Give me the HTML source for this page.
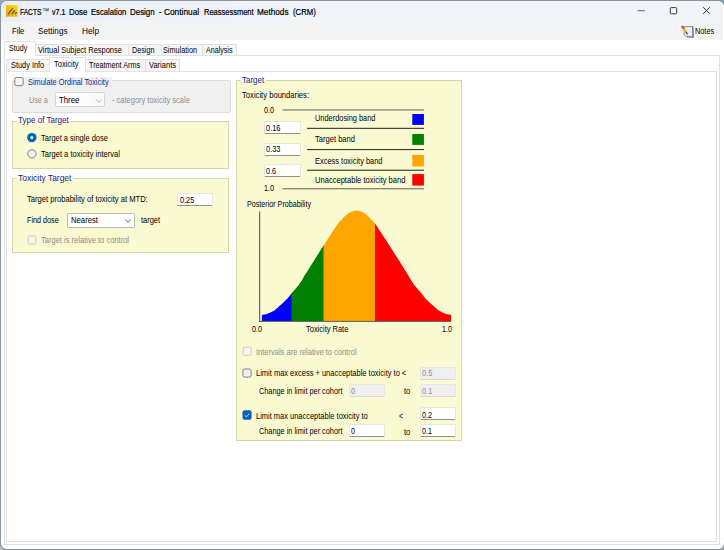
<!DOCTYPE html>
<html><head><meta charset="utf-8"><title>FACTS v7.1 Dose Escalation Design - Continual Reassessment Methods (CRM)</title>
<style>
html,body{margin:0;padding:0}
body{width:724px;height:550px;overflow:hidden;background:linear-gradient(90deg,#93abc2,#7f9bb6);font-family:"Liberation Sans",sans-serif;position:relative}
#win{position:absolute;left:0;top:0;width:724px;height:550px;overflow:hidden}
.b,.abs,.t{position:absolute;box-sizing:border-box}
.t{white-space:pre;line-height:1;transform-origin:0 50%;display:block}
.in{background:#fff;border:1px solid #e6e6e0;border-bottom-color:#909090;border-radius:1.5px}
.ind{background:#efefef;border:1px solid #e6e6e2;border-bottom-color:#d8d8d8;border-radius:1.5px}
.yg{background:#fafad2;border:1px solid #d6d6ae}

</style></head>
<body>
<div id="win">
<!-- desktop strip visible under the window -->
<div class="b" style="left:0;top:546px;width:724px;height:4px;background:linear-gradient(90deg,#b9bcc0 0,#b9bcc0 30px,#4a7a95 40px,#2f5fa8 70px,#2b4f8f 250px,#50658a 300px,#a9abae 325px,#a4a4a4 100%)"></div>
<!-- window frame -->
<div class="b" style="left:0.5px;top:1px;width:723px;height:547.5px;background:#fff;border-radius:6px;box-shadow:0 0 0 1px #8a949f"></div>
<div class="b" style="left:1px;top:1px;width:722px;height:20.5px;background:linear-gradient(90deg,#e9eff7,#f1f4f9 40%,#f1f4f9);border-radius:6px 6px 0 0"></div>
<div class="b" style="left:1px;top:21.5px;width:722px;height:18px;background:#f3f3f3"></div>
<!-- outer tab page -->
<div class="b" style="left:4px;top:55px;width:716px;height:490px;background:#fff;border:1px solid #e2e2e2"></div>
<!-- inner tab page -->
<div class="b" style="left:6px;top:71px;width:711px;height:471px;background:#fff;border:1px solid #e2e2e2"></div>
<!-- tabs row 1 -->
<div class="b" style="left:35px;top:44px;width:201.5px;height:11px;background:#f6f6f6;border:1px solid #e0e0e0;border-bottom:none"></div>
<div class="b" style="left:127.5px;top:44px;width:1px;height:12px;background:#e0e0e0"></div>
<div class="b" style="left:161px;top:44px;width:1px;height:12px;background:#e0e0e0"></div>
<div class="b" style="left:202px;top:44px;width:1px;height:12px;background:#e0e0e0"></div>
<div class="b" style="left:4px;top:41px;width:31.5px;height:15px;background:#fff;border:1px solid #e0e0e0;border-bottom:none"></div>
<!-- tabs row 2 -->
<div class="b" style="left:6px;top:59px;width:173.5px;height:12px;background:#f6f6f6;border:1px solid #e0e0e0;border-bottom:none"></div>
<div class="b" style="left:144.5px;top:59px;width:1px;height:12px;background:#e0e0e0"></div>
<div class="b" style="left:48.5px;top:57px;width:37px;height:15px;background:#fff;border:1px solid #e0e0e0;border-bottom:none"></div>
<!-- title bar icon -->
<svg class="abs" style="left:6.2px;top:5.2px" width="11.8" height="11.7" viewBox="0 0 12 12" preserveAspectRatio="none">
<defs><linearGradient id="ig" x1="0" y1="1" x2="1" y2="0"><stop offset="0" stop-color="#f59a0e"/><stop offset="1" stop-color="#ffe400"/></linearGradient></defs>
<rect x="0" y="0" width="12" height="12" fill="url(#ig)"/>
<path transform="translate(0.5,0.45)" d="M2 8.7 L6.2 3 M5.8 8.6 L8.2 5.3 M9 8.4 L10.1 7.3" stroke="#54524a" stroke-width="1.25" fill="none" stroke-linecap="round"/>
</svg>
<!-- window controls -->
<svg class="abs" style="left:630px;top:0" width="94" height="22" viewBox="0 0 94 22">
<path d="M7.5 10.7 H15" stroke="#5e5e5e" stroke-width="0.9" fill="none"/>
<rect x="40.3" y="7.6" width="6.4" height="6.2" rx="1" fill="none" stroke="#222" stroke-width="0.9"/>
<path d="M73.2 7.2 L79.8 13.9 M79.8 7.2 L73.2 13.9" stroke="#222" stroke-width="0.9" fill="none"/>
</svg>
<!-- notes icon -->
<svg class="abs" style="left:681px;top:24px" width="14" height="15" viewBox="0 0 14 15">
<path d="M3.3 2.7 L11.5 2.4 L12 13.1 L5.6 12.5 L3.1 10.8 Z" fill="#e9eff6" stroke="#80868f" stroke-width="0.9" stroke-linejoin="round"/>
<path d="M11.7 2.6 L12.2 13.2 L5.8 12.7" stroke="#6c717a" stroke-width="1.1" fill="none"/>
<path d="M1.9 3.4 L5.5 8.7" stroke="#ecb51e" stroke-width="2.1"/>
<path d="M1.3 2.5 L2.1 3.7" stroke="#d63a3a" stroke-width="2.1" stroke-linecap="round"/>
<path d="M5.4 8.6 L6.2 9.9" stroke="#5a4a30" stroke-width="1.4" stroke-linecap="round"/>
</svg>
<!-- gray group: simulate ordinal toxicity -->
<div class="b" style="left:12px;top:80px;width:219px;height:33px;background:#f0f0f0;border:1px solid #dcdcdc;border-radius:2px"></div>
<div class="b" style="left:13.5px;top:77px;width:98px;height:10px;background:#f0f0f0"></div>
<div class="b" style="left:55px;top:92px;width:50px;height:15px;background:linear-gradient(90deg,#fbfbfb 0,#fbfbfb 35.6px,#e9e9e9 35.6px,#e9e9e9 36.4px,#f8f8f8 36.4px);border:1px solid #d6d6d6;border-radius:2px"></div>
<svg class="abs" style="left:94.6px;top:97.6px" width="8" height="6" viewBox="0 0 8 6"><path d="M1.2 1.6 L4 4.2 L6.8 1.6" stroke="#a2a2a2" stroke-width="0.8" fill="none"/></svg>
<!-- yellow group: type of target -->
<div class="b yg" style="left:12.4px;top:120.7px;width:216.6px;height:48px"></div>
<div class="b" style="left:17px;top:117px;width:53px;height:6px;background:#fff"></div>
<div class="b" style="left:17px;top:121px;width:53px;height:3px;background:#fafad2"></div>
<svg class="abs" style="left:24px;top:128px" width="16" height="34" viewBox="0 0 16 34">
<circle cx="7.85" cy="9.6" r="4.7" fill="#0063bd"/><circle cx="7.85" cy="9.6" r="1.6" fill="#fff"/>
<circle cx="7.9" cy="25.8" r="4.2" fill="#f1f1f1" stroke="#767676" stroke-width="0.9"/>
</svg>
<!-- yellow group: toxicity target -->
<div class="b yg" style="left:12.4px;top:178.2px;width:216.6px;height:74.6px"></div>
<div class="b" style="left:17px;top:175px;width:56px;height:6px;background:#fff"></div>
<div class="b" style="left:17px;top:179px;width:56px;height:3px;background:#fafad2"></div>
<div class="b in" style="left:177.4px;top:193px;width:35.2px;height:13.4px"></div>
<div class="b in" style="left:67.3px;top:213px;width:68px;height:14.6px;border-color:#b8b8b8"></div>
<svg class="abs" style="left:124px;top:217.5px" width="8" height="6" viewBox="0 0 8 6"><path d="M1.2 1.6 L4 4.2 L6.8 1.6" stroke="#444" stroke-width="0.8" fill="none"/></svg>
<!-- yellow group: target (right) -->
<div class="b yg" style="left:236px;top:80px;width:226px;height:361px"></div>
<div class="b" style="left:241px;top:77px;width:25px;height:6px;background:#fff"></div>
<div class="b" style="left:241px;top:81px;width:25px;height:3px;background:#fafad2"></div>
<!-- boundaries -->
<div class="b in" style="left:264px;top:121px;width:36.5px;height:13px"></div>
<div class="b in" style="left:264px;top:143px;width:36.5px;height:13px"></div>
<div class="b in" style="left:264px;top:164px;width:36.5px;height:13px"></div>
<!-- lower controls -->
<div class="b ind" style="left:419.6px;top:367px;width:36.6px;height:13px"></div>
<div class="b ind" style="left:348.5px;top:384px;width:36.6px;height:13px"></div>
<div class="b ind" style="left:419.6px;top:384px;width:36.6px;height:13px"></div>
<div class="b in" style="left:419.6px;top:407px;width:36.6px;height:13.4px"></div>
<div class="b in" style="left:348.5px;top:424px;width:36.6px;height:13.4px"></div>
<div class="b in" style="left:419.6px;top:424px;width:36.6px;height:13.4px"></div>
<!-- checkboxes -->
<svg class="abs" style="left:0;top:0" width="724" height="550" viewBox="0 0 724 550">
<rect x="14.75" y="77.45" width="8.40" height="8.20" rx="1.9" fill="#f4f4f4" stroke="#6e6e6e" stroke-width="0.9"/>
<rect x="28.05" y="235.95" width="7.80" height="8.20" rx="1.9" fill="#f6f6f0" stroke="#c6c6c0" stroke-width="0.9"/>
<rect x="243.15" y="347.15" width="8.10" height="8.20" rx="1.9" fill="#f6f6f0" stroke="#c6c6c0" stroke-width="0.9"/>
<rect x="242.95" y="368.95" width="8.20" height="8.20" rx="1.9" fill="#eeeeee" stroke="#747474" stroke-width="0.9"/>
<rect x="242.5" y="410.3" width="9.1" height="9.4" rx="2" fill="#0b5fbc"/>
<path d="M244.9 415.2 L246.5 416.8 L249.3 413.6" stroke="#fff" stroke-width="0.8" fill="none"/>
</svg>

<svg class="abs" style="left:0;top:0" width="724" height="550" viewBox="0 0 724 550"><polygon points="261.9,321.1 261.9,314.9 262.9,314.7 263.9,314.6 264.9,314.4 265.9,314.2 266.9,314.0 267.9,313.6 268.9,313.2 269.9,312.7 270.9,312.2 271.9,311.8 272.9,311.3 273.9,310.7 274.9,310.0 275.9,309.2 276.9,308.3 277.9,307.4 278.9,306.5 279.9,305.6 280.9,304.7 281.9,303.8 282.9,302.9 283.9,302.0 284.9,301.1 285.9,300.1 286.9,299.1 287.9,298.0 288.9,296.8 289.9,295.5 290.9,294.2 291.9,293.0 291.9,321.1" fill="#0000ff"/><polygon points="291.9,321.1 291.9,293.0 292.9,291.8 294.0,290.6 295.0,289.4 296.0,288.2 297.0,287.0 298.1,285.8 299.1,284.6 300.1,283.1 301.2,281.5 302.2,279.7 303.2,277.9 304.2,276.1 305.3,274.5 306.3,272.9 307.3,271.2 308.4,269.6 309.4,267.9 310.4,266.3 311.5,264.7 312.5,263.0 313.5,261.4 314.5,259.7 315.6,258.1 316.6,256.5 317.6,254.8 318.7,253.2 319.7,251.6 320.7,249.9 321.7,248.3 322.8,246.7 323.8,245.1 323.8,321.1" fill="#008000"/><polygon points="323.8,321.1 323.8,245.1 324.8,243.6 325.8,242.0 326.8,240.5 327.8,239.0 328.8,237.4 329.8,235.9 330.8,234.4 331.8,232.9 332.8,231.3 333.8,229.8 334.8,228.3 335.8,226.7 336.8,225.2 337.8,223.9 338.8,222.6 339.8,221.4 340.8,220.4 341.8,219.4 342.8,218.3 343.8,217.3 344.8,216.3 345.8,215.4 346.8,214.6 347.8,213.8 348.8,213.1 349.9,212.4 350.9,211.9 351.9,211.5 352.9,211.2 353.9,211.0 354.9,210.7 355.9,210.6 356.9,210.6 357.9,210.7 358.9,210.9 359.9,211.2 360.9,211.4 361.9,211.8 362.9,212.3 363.9,212.9 364.9,213.6 365.9,214.3 366.9,215.2 367.9,216.1 368.9,217.0 369.9,218.1 370.9,219.1 371.9,220.1 372.9,221.2 373.9,222.3 374.9,223.5 374.9,321.1" fill="#ffa500"/><polygon points="374.9,321.1 374.9,223.5 375.9,224.8 376.9,226.3 377.9,227.8 378.9,229.4 379.9,230.9 380.9,232.4 381.9,234.0 382.9,235.5 383.9,237.0 384.9,238.6 385.9,240.1 386.9,241.6 387.9,243.2 388.9,244.7 389.9,246.3 390.9,247.8 391.9,249.4 392.9,251.0 393.9,252.6 395.0,254.2 396.0,255.8 397.0,257.4 398.0,258.9 399.0,260.5 400.0,262.1 401.0,263.7 402.0,265.3 403.0,266.9 404.0,268.5 405.0,270.1 406.0,271.7 407.0,273.3 408.0,274.9 409.0,276.5 410.0,278.3 411.0,280.1 412.0,281.7 413.0,283.3 414.0,284.7 415.0,285.9 416.0,287.1 417.0,288.2 418.0,289.4 419.0,290.5 420.0,291.7 421.0,292.9 422.0,294.1 423.0,295.4 424.0,296.7 425.0,297.9 426.0,299.0 427.0,300.1 428.0,301.0 429.0,302.0 430.0,302.9 431.0,303.8 432.1,304.7 433.1,305.6 434.1,306.5 435.1,307.4 436.1,308.3 437.1,309.2 438.1,310.0 439.1,310.7 440.1,311.2 441.1,311.8 442.1,312.2 443.1,312.7 444.1,313.2 445.1,313.6 446.1,313.9 447.1,314.2 448.1,314.4 449.1,314.6 450.1,314.7 451.1,314.9 451.1,321.1" fill="#ff0000"/><rect x="259.2" y="211.5" width="1" height="110.3" fill="#4a4a4a"/><rect x="259.2" y="320.9" width="192" height="0.9" fill="#4a4a4a"/><rect x="282.4" y="109.4" width="141.6" height="1.1" fill="#6e6e60"/><rect x="307.0" y="127.8" width="117.0" height="1.1" fill="#33332a"/><rect x="307.0" y="149.0" width="117.0" height="1.1" fill="#33332a"/><rect x="307.0" y="169.7" width="117.0" height="1.1" fill="#33332a"/><rect x="282.4" y="188.2" width="141.6" height="1.1" fill="#6e6e60"/><rect x="412.3" y="114.0" width="11.6" height="10.9" fill="#0000ff"/><rect x="412.3" y="134.0" width="11.6" height="10.9" fill="#008000"/><rect x="412.3" y="155.0" width="11.6" height="11.5" fill="#ffa500"/><rect x="412.3" y="174.1" width="11.6" height="11.5" fill="#ff0000"/></svg>
<span class="t" style="left:20px;top:8px;font-size:9.2px;color:#000;transform:scaleX(0.723);-webkit-text-stroke:0.22px #000">FACTS</span>
<span class="t" style="left:42px;top:8px;font-size:8.2px;color:#000;transform:scaleX(0.855)">™</span>
<span class="t" style="left:52px;top:8px;font-size:9.2px;color:#000;transform:scaleX(0.771);-webkit-text-stroke:0.22px #000">v7.1</span>
<span class="t" style="left:69px;top:8px;font-size:9.2px;color:#000;transform:scaleX(0.862);-webkit-text-stroke:0.22px #000">Dose</span>
<span class="t" style="left:91px;top:8px;font-size:9.2px;color:#000;transform:scaleX(0.833);-webkit-text-stroke:0.22px #000">Escalation</span>
<span class="t" style="left:130px;top:8px;font-size:9.2px;color:#000;transform:scaleX(0.863);-webkit-text-stroke:0.22px #000">Design</span>
<span class="t" style="left:159px;top:8px;font-size:9.2px;color:#000;transform:scaleX(0.751);-webkit-text-stroke:0.22px #000">-</span>
<span class="t" style="left:164px;top:8px;font-size:9.2px;color:#000;transform:scaleX(0.904);-webkit-text-stroke:0.22px #000">Continual</span>
<span class="t" style="left:204px;top:8px;font-size:9.2px;color:#000;transform:scaleX(0.816);-webkit-text-stroke:0.22px #000">Reassessment</span>
<span class="t" style="left:257px;top:8px;font-size:9.2px;color:#000;transform:scaleX(0.894);-webkit-text-stroke:0.22px #000">Methods</span>
<span class="t" style="left:293px;top:8px;font-size:9.2px;color:#000;transform:scaleX(0.843);-webkit-text-stroke:0.22px #000">(CRM)</span>
<span class="t" style="left:12px;top:26px;font-size:9.4px;color:#000;transform:scaleX(0.821)">File</span>
<span class="t" style="left:38px;top:26px;font-size:9.4px;color:#000;transform:scaleX(0.871)">Settings</span>
<span class="t" style="left:82px;top:26px;font-size:9.4px;color:#000;transform:scaleX(0.882)">Help</span>
<span class="t" style="left:695px;top:26px;font-size:9.4px;color:#000;transform:scaleX(0.780)">Notes</span>
<span class="t" style="left:9px;top:44px;font-size:9.0px;color:#000;transform:scaleX(0.795)">Study</span>
<span class="t" style="left:38px;top:46px;font-size:9.0px;color:#000;transform:scaleX(0.832)">Virtual Subject Response</span>
<span class="t" style="left:132px;top:46px;font-size:9.0px;color:#000;transform:scaleX(0.800)">Design</span>
<span class="t" style="left:163px;top:46px;font-size:9.0px;color:#000;transform:scaleX(0.809)">Simulation</span>
<span class="t" style="left:206px;top:46px;font-size:9.0px;color:#000;transform:scaleX(0.791)">Analysis</span>
<span class="t" style="left:11px;top:61px;font-size:9.0px;color:#000;transform:scaleX(0.819)">Study Info</span>
<span class="t" style="left:54px;top:60px;font-size:9.0px;color:#000;transform:scaleX(0.830)">Toxicity</span>
<span class="t" style="left:89px;top:61px;font-size:9.0px;color:#000;transform:scaleX(0.801)">Treatment Arms</span>
<span class="t" style="left:149px;top:61px;font-size:9.0px;color:#000;transform:scaleX(0.834)">Variants</span>
<span class="t" style="left:28px;top:78px;font-size:9.0px;color:#1c1c8c;transform:scaleX(0.819)">Simulate Ordinal Toxicity</span>
<span class="t" style="left:29px;top:96px;font-size:9.0px;color:#8c8c8c;transform:scaleX(0.799)">Use a</span>
<span class="t" style="left:59px;top:96px;font-size:9.0px;color:#000;transform:scaleX(0.863)">Three</span>
<span class="t" style="left:112px;top:96px;font-size:9.0px;color:#8c8c8c;transform:scaleX(0.832)">- category toxicity scale</span>
<span class="t" style="left:18px;top:116px;font-size:9.0px;color:#1c1c8c;transform:scaleX(0.893)">Type of Target</span>
<span class="t" style="left:41px;top:134px;font-size:9.0px;color:#000;transform:scaleX(0.830)">Target a single dose</span>
<span class="t" style="left:41px;top:150px;font-size:9.0px;color:#000;transform:scaleX(0.839)">Target a toxicity interval</span>
<span class="t" style="left:18px;top:174px;font-size:9.0px;color:#1c1c8c;transform:scaleX(0.939)">Toxicity Target</span>
<span class="t" style="left:27px;top:195px;font-size:9.0px;color:#000;transform:scaleX(0.844)">Target probability of toxicity at MTD:</span>
<span class="t" style="left:180px;top:196px;font-size:9.0px;color:#000;transform:scaleX(0.816)">0.25</span>
<span class="t" style="left:27px;top:216px;font-size:9.0px;color:#000;transform:scaleX(0.802)">Find dose</span>
<span class="t" style="left:71px;top:216px;font-size:9.0px;color:#000;transform:scaleX(0.857)">Nearest</span>
<span class="t" style="left:141px;top:216px;font-size:9.0px;color:#000;transform:scaleX(0.826)">target</span>
<span class="t" style="left:41px;top:236px;font-size:9.0px;color:#8c8c8c;transform:scaleX(0.838)">Target is relative to control</span>
<span class="t" style="left:242px;top:76px;font-size:9.0px;color:#1c1c8c;transform:scaleX(0.887)">Target</span>
<span class="t" style="left:242px;top:91px;font-size:9.0px;color:#000;transform:scaleX(0.848)">Toxicity boundaries:</span>
<span class="t" style="left:264px;top:106px;font-size:9.0px;color:#000;transform:scaleX(0.799)">0.0</span>
<span class="t" style="left:266px;top:124px;font-size:9.0px;color:#000;transform:scaleX(0.827)">0.16</span>
<span class="t" style="left:266px;top:145px;font-size:9.0px;color:#000;transform:scaleX(0.827)">0.33</span>
<span class="t" style="left:266px;top:167px;font-size:9.0px;color:#000;transform:scaleX(0.799)">0.6</span>
<span class="t" style="left:264px;top:184px;font-size:9.0px;color:#000;transform:scaleX(0.799)">1.0</span>
<span class="t" style="left:315px;top:114px;font-size:9.0px;color:#000;transform:scaleX(0.822)">Underdosing band</span>
<span class="t" style="left:315px;top:135px;font-size:9.0px;color:#000;transform:scaleX(0.841)">Target band</span>
<span class="t" style="left:315px;top:157px;font-size:9.0px;color:#000;transform:scaleX(0.828)">Excess toxicity band</span>
<span class="t" style="left:315px;top:176px;font-size:9.0px;color:#000;transform:scaleX(0.841)">Unacceptable toxicity band</span>
<span class="t" style="left:247px;top:200px;font-size:9.0px;color:#000;transform:scaleX(0.795)">Posterior Probability</span>
<span class="t" style="left:252px;top:325px;font-size:9.0px;color:#000;transform:scaleX(0.799)">0.0</span>
<span class="t" style="left:306px;top:325px;font-size:9.0px;color:#000;transform:scaleX(0.829)">Toxicity Rate</span>
<span class="t" style="left:442px;top:325px;font-size:9.0px;color:#000;transform:scaleX(0.783)">1.0</span>
<span class="t" style="left:256px;top:348px;font-size:9.0px;color:#8c8c8c;transform:scaleX(0.834)">Intervals are relative to control</span>
<span class="t" style="left:256px;top:369px;font-size:9.0px;color:#000;transform:scaleX(0.832)">Limit max excess + unacceptable toxicity to &lt;</span>
<span class="t" style="left:422px;top:369px;font-size:9.0px;color:#8f8f8f;transform:scaleX(0.823)">0.5</span>
<span class="t" style="left:259px;top:387px;font-size:9.0px;color:#000;transform:scaleX(0.814)">Change in limit per cohort</span>
<span class="t" style="left:351px;top:387px;font-size:9.0px;color:#8f8f8f;transform:scaleX(0.837)">0</span>
<span class="t" style="left:404px;top:387px;font-size:9.0px;color:#000;transform:scaleX(0.838)">to</span>
<span class="t" style="left:422px;top:387px;font-size:9.0px;color:#8f8f8f;transform:scaleX(0.823)">0.1</span>
<span class="t" style="left:256px;top:412px;font-size:9.0px;color:#000;transform:scaleX(0.830)">Limit max unacceptable toxicity to</span>
<span class="t" style="left:399px;top:412px;font-size:9.0px;color:#000;transform:scaleX(0.760)">&lt;</span>
<span class="t" style="left:422px;top:411px;font-size:9.0px;color:#000;transform:scaleX(0.799)">0.2</span>
<span class="t" style="left:259px;top:427px;font-size:9.0px;color:#000;transform:scaleX(0.814)">Change in limit per cohort</span>
<span class="t" style="left:351px;top:427px;font-size:9.0px;color:#000;transform:scaleX(0.798)">0</span>
<span class="t" style="left:404px;top:428px;font-size:9.0px;color:#000;transform:scaleX(0.838)">to</span>
<span class="t" style="left:422px;top:427px;font-size:9.0px;color:#000;transform:scaleX(0.799)">0.1</span>
</div>
</body></html>
